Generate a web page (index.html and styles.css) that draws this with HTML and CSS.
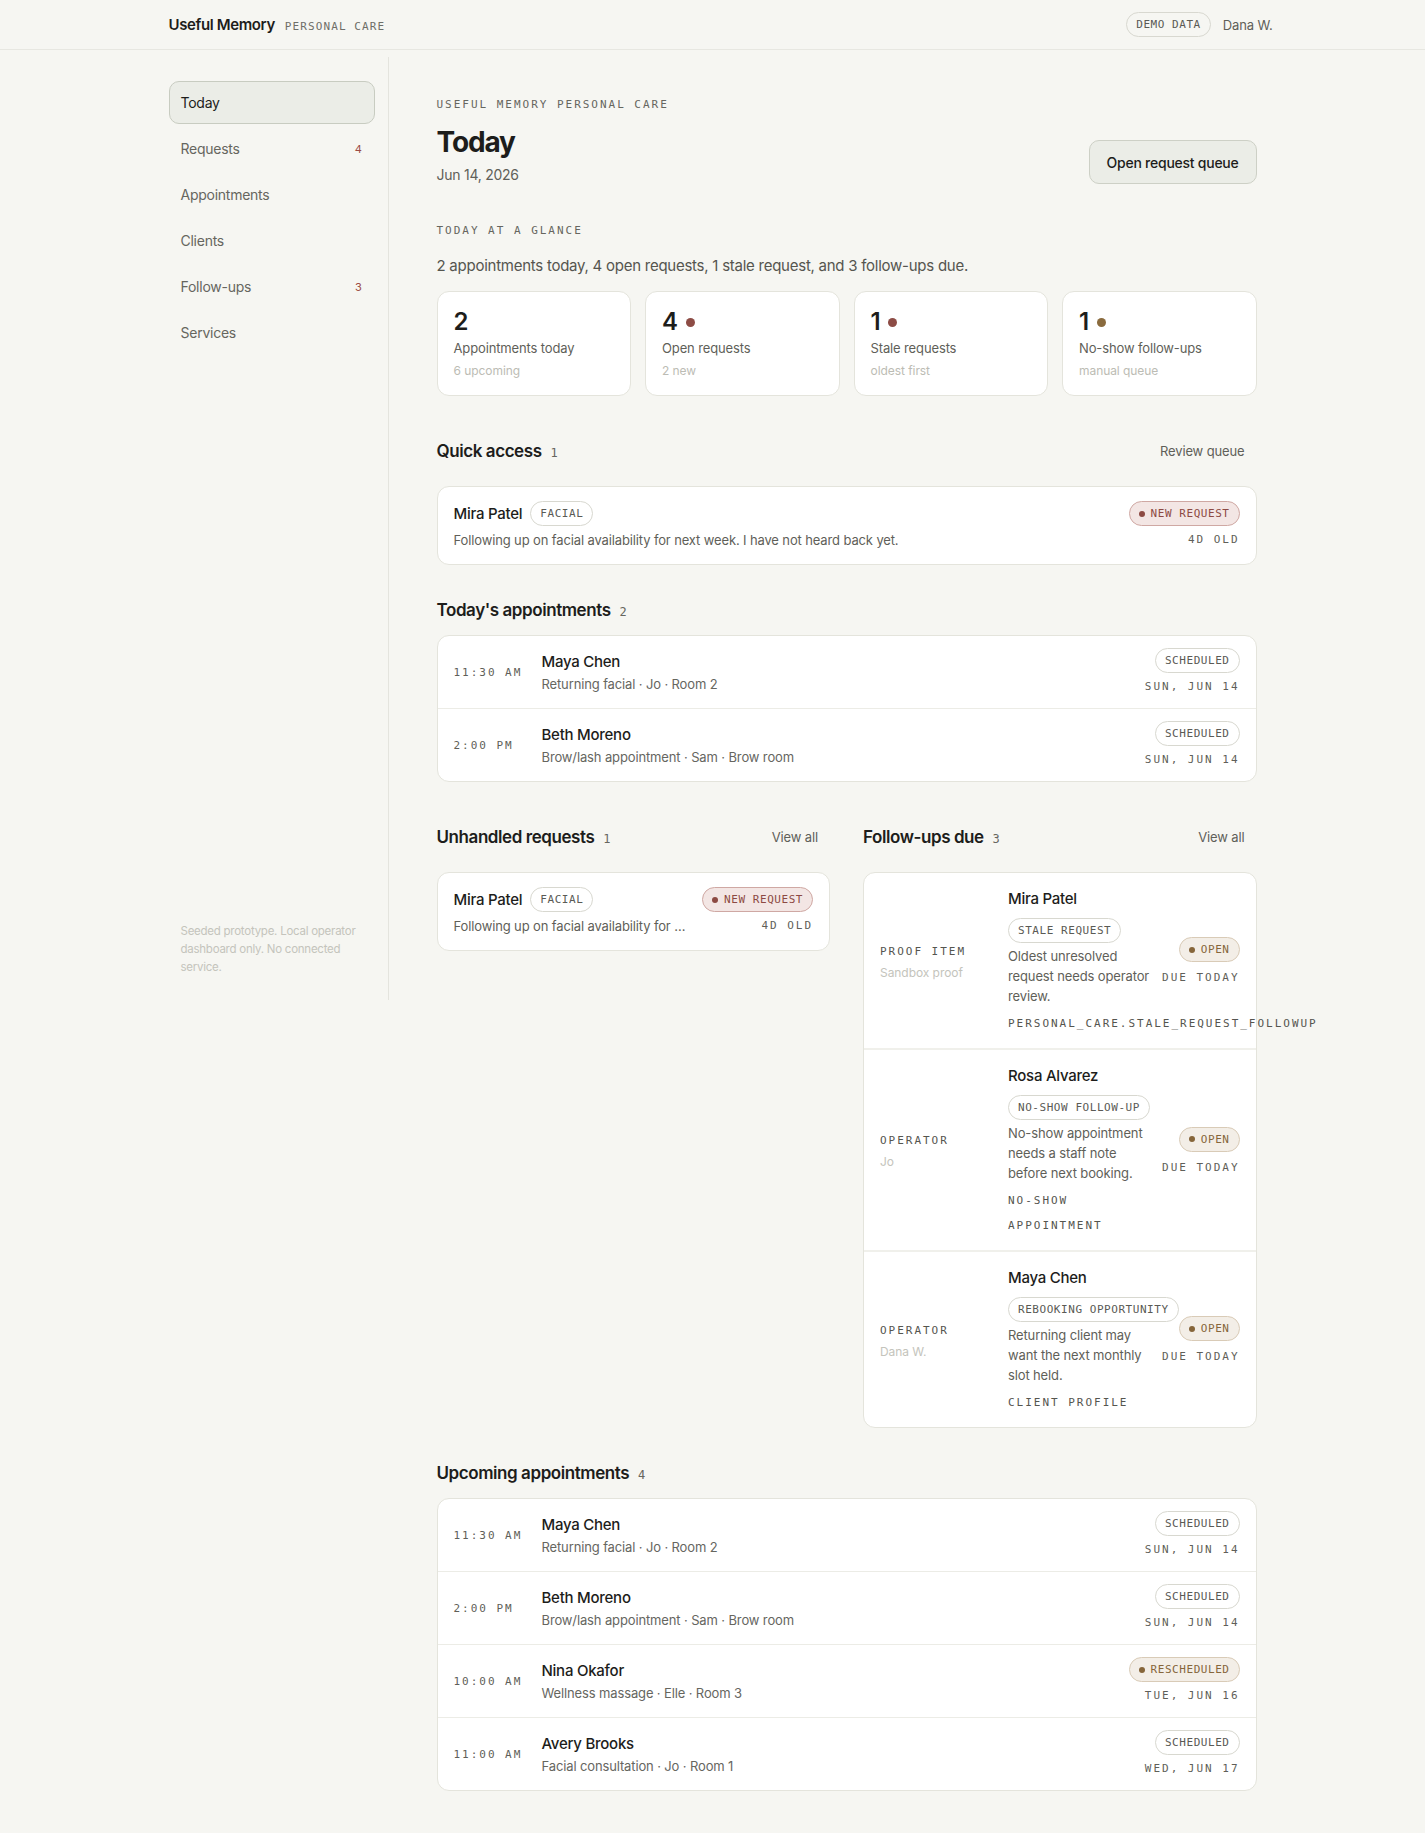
FILE: index.html
```html
<!DOCTYPE html>
<html>
<head>
    <link rel="stylesheet" href="styles.css">
</head>
<body>
    <header class="topbar">
        <div class="topbar-inner">
            <div class="brand">
                <span class="brand-name">Useful Memory</span>
                <span class="brand-tag">PERSONAL CARE</span>
            </div>
            <div class="topbar-right">
                <span class="pill">DEMO DATA</span>
                <span class="user">Dana W.</span>
            </div>
        </div>
    </header>

    <div class="shell">
        <aside class="sidebar">
            <nav class="nav">
                <a class="nav-item active">Today</a>
                <a class="nav-item">Requests <span class="nav-count">4</span></a>
                <a class="nav-item">Appointments</a>
                <a class="nav-item">Clients</a>
                <a class="nav-item">Follow-ups <span class="nav-count">3</span></a>
                <a class="nav-item">Services</a>
            </nav>
            <p class="sidebar-note">Seeded prototype. Local operator dashboard only. No connected service.</p>
        </aside>

        <main class="main">
            <div class="page-head">
                <div>
                    <div class="eyebrow">USEFUL MEMORY PERSONAL CARE</div>
                    <h1>Today</h1>
                    <div class="page-date">Jun 14, 2026</div>
                </div>
                <button class="btn">Open request queue</button>
            </div>

            <section class="glance">
                <div class="eyebrow">TODAY AT A GLANCE</div>
                <p class="summary">2 appointments today, 4 open requests, 1 stale request, and 3 follow-ups due.</p>
                <div class="stats">
                    <div class="stat">
                        <div class="stat-num">2</div>
                        <div class="stat-label">Appointments today</div>
                        <div class="stat-sub">6 upcoming</div>
                    </div>
                    <div class="stat">
                        <div class="stat-num">4 <span class="dot dot-red"></span></div>
                        <div class="stat-label">Open requests</div>
                        <div class="stat-sub">2 new</div>
                    </div>
                    <div class="stat">
                        <div class="stat-num">1 <span class="dot dot-red"></span></div>
                        <div class="stat-label">Stale requests</div>
                        <div class="stat-sub">oldest first</div>
                    </div>
                    <div class="stat">
                        <div class="stat-num">1 <span class="dot dot-amber"></span></div>
                        <div class="stat-label">No-show follow-ups</div>
                        <div class="stat-sub">manual queue</div>
                    </div>
                </div>
            </section>

            <section class="section">
                <div class="section-head">
                    <h2>Quick access <span class="count">1</span></h2>
                    <a class="link">Review queue</a>
                </div>
                <div class="card">
                    <div class="request">
                        <div class="request-main">
                            <div class="request-title">
                                <span class="name">Mira Patel</span>
                                <span class="pill">FACIAL</span>
                            </div>
                            <div class="request-text">Following up on facial availability for next week. I have not heard back yet.</div>
                        </div>
                        <div class="request-side">
                            <span class="pill pill-red"><span class="pill-dot"></span>NEW REQUEST</span>
                            <span class="mono-meta">4D OLD</span>
                        </div>
                    </div>
                </div>
            </section>

            <section class="section">
                <div class="section-head">
                    <h2>Today's appointments <span class="count">2</span></h2>
                </div>
                <div class="card">
                    <div class="appt">
                        <div class="appt-time">11:30 AM</div>
                        <div class="appt-main">
                            <div class="name">Maya Chen</div>
                            <div class="appt-sub">Returning facial · Jo · Room 2</div>
                        </div>
                        <div class="appt-side">
                            <span class="pill">SCHEDULED</span>
                            <span class="mono-meta">SUN, JUN 14</span>
                        </div>
                    </div>
                    <div class="appt">
                        <div class="appt-time">2:00 PM</div>
                        <div class="appt-main">
                            <div class="name">Beth Moreno</div>
                            <div class="appt-sub">Brow/lash appointment · Sam · Brow room</div>
                        </div>
                        <div class="appt-side">
                            <span class="pill">SCHEDULED</span>
                            <span class="mono-meta">SUN, JUN 14</span>
                        </div>
                    </div>
                </div>
            </section>

            <div class="two-col">
                <section class="section">
                    <div class="section-head">
                        <h2>Unhandled requests <span class="count">1</span></h2>
                        <a class="link">View all</a>
                    </div>
                    <div class="card">
                        <div class="request">
                            <div class="request-main">
                                <div class="request-title">
                                    <span class="name">Mira Patel</span>
                                    <span class="pill">FACIAL</span>
                                </div>
                                <div class="request-text truncate">Following up on facial availability for next week. I have not heard back yet.</div>
                            </div>
                            <div class="request-side">
                                <span class="pill pill-red"><span class="pill-dot"></span>NEW REQUEST</span>
                                <span class="mono-meta">4D OLD</span>
                            </div>
                        </div>
                    </div>
                </section>

                <section class="section">
                    <div class="section-head">
                        <h2>Follow-ups due <span class="count">3</span></h2>
                        <a class="link">View all</a>
                    </div>
                    <div class="card">
                        <div class="followup">
                            <div class="fu-owner">
                                <div class="fu-role">PROOF ITEM</div>
                                <div class="fu-who">Sandbox proof</div>
                            </div>
                            <div class="fu-main">
                                <div class="name">Mira Patel</div>
                                <div class="fu-tag"><span class="pill">STALE REQUEST</span></div>
                                <div class="fu-text">Oldest unresolved request needs operator review.</div>
                                <div class="fu-key">PERSONAL_CARE.STALE_REQUEST_FOLLOWUP</div>
                            </div>
                            <div class="fu-side">
                                <span class="pill pill-amber"><span class="pill-dot"></span>OPEN</span>
                                <span class="mono-meta">DUE TODAY</span>
                            </div>
                        </div>
                        <div class="followup">
                            <div class="fu-owner">
                                <div class="fu-role">OPERATOR</div>
                                <div class="fu-who">Jo</div>
                            </div>
                            <div class="fu-main">
                                <div class="name">Rosa Alvarez</div>
                                <div class="fu-tag"><span class="pill">NO-SHOW FOLLOW-UP</span></div>
                                <div class="fu-text">No-show appointment needs a staff note before next booking.</div>
                                <div class="fu-key">NO-SHOW APPOINTMENT</div>
                            </div>
                            <div class="fu-side">
                                <span class="pill pill-amber"><span class="pill-dot"></span>OPEN</span>
                                <span class="mono-meta">DUE TODAY</span>
                            </div>
                        </div>
                        <div class="followup">
                            <div class="fu-owner">
                                <div class="fu-role">OPERATOR</div>
                                <div class="fu-who">Dana W.</div>
                            </div>
                            <div class="fu-main">
                                <div class="name">Maya Chen</div>
                                <div class="fu-tag"><span class="pill">REBOOKING OPPORTUNITY</span></div>
                                <div class="fu-text">Returning client may want the next monthly slot held.</div>
                                <div class="fu-key">CLIENT PROFILE</div>
                            </div>
                            <div class="fu-side">
                                <span class="pill pill-amber"><span class="pill-dot"></span>OPEN</span>
                                <span class="mono-meta">DUE TODAY</span>
                            </div>
                        </div>
                    </div>
                </section>
            </div>

            <section class="section">
                <div class="section-head">
                    <h2>Upcoming appointments <span class="count">4</span></h2>
                </div>
                <div class="card">
                    <div class="appt">
                        <div class="appt-time">11:30 AM</div>
                        <div class="appt-main">
                            <div class="name">Maya Chen</div>
                            <div class="appt-sub">Returning facial · Jo · Room 2</div>
                        </div>
                        <div class="appt-side">
                            <span class="pill">SCHEDULED</span>
                            <span class="mono-meta">SUN, JUN 14</span>
                        </div>
                    </div>
                    <div class="appt">
                        <div class="appt-time">2:00 PM</div>
                        <div class="appt-main">
                            <div class="name">Beth Moreno</div>
                            <div class="appt-sub">Brow/lash appointment · Sam · Brow room</div>
                        </div>
                        <div class="appt-side">
                            <span class="pill">SCHEDULED</span>
                            <span class="mono-meta">SUN, JUN 14</span>
                        </div>
                    </div>
                    <div class="appt">
                        <div class="appt-time">10:00 AM</div>
                        <div class="appt-main">
                            <div class="name">Nina Okafor</div>
                            <div class="appt-sub">Wellness massage · Elle · Room 3</div>
                        </div>
                        <div class="appt-side">
                            <span class="pill pill-amber"><span class="pill-dot"></span>RESCHEDULED</span>
                            <span class="mono-meta">TUE, JUN 16</span>
                        </div>
                    </div>
                    <div class="appt">
                        <div class="appt-time">11:00 AM</div>
                        <div class="appt-main">
                            <div class="name">Avery Brooks</div>
                            <div class="appt-sub">Facial consultation · Jo · Room 1</div>
                        </div>
                        <div class="appt-side">
                            <span class="pill">SCHEDULED</span>
                            <span class="mono-meta">WED, JUN 17</span>
                        </div>
                    </div>
                </div>
            </section>
        </main>
    </div>
</body>
</html>
```

FILE: styles.css
```css
* {
    box-sizing: border-box;
}
body {
    margin: 0;
    background: #f6f6f2;
    color: #1d1d1b;
    font-family: Inter, "Noto Sans", sans-serif;
    font-size: 14px;
    letter-spacing: -0.018em;
}
h1, h2, p {
    margin: 0;
}

/* top bar */
.topbar {
    height: 50px;
    border-bottom: 1px solid #e7e7e1;
}
.topbar-inner {
    max-width: 1088px;
    height: 49px;
    margin: 0 auto;
    display: flex;
    align-items: center;
    justify-content: space-between;
}
.brand {
    display: flex;
    align-items: baseline;
    gap: 10px;
}
.brand-name {
    font-size: 15px;
    font-weight: 600;
    letter-spacing: -0.025em;
}
.brand-tag {
    font-family: "DejaVu Sans Mono", monospace;
    font-size: 11px;
    letter-spacing: 0.1em;
    color: #6e6e68;
}
.topbar-right {
    display: flex;
    align-items: center;
    gap: 12px;
    margin-right: -16px;
}
.user {
    font-size: 13px;
    letter-spacing: -0.01em;
    color: #5f5f59;
}

/* shared pill */
.pill {
    display: inline-flex;
    align-items: center;
    gap: 6px;
    height: 25px;
    padding: 0 9px;
    border: 1px solid #d8d8d0;
    border-radius: 999px;
    background: #fff;
    font-family: "DejaVu Sans Mono", monospace;
    font-size: 11px;
    letter-spacing: 0.05em;
    color: #5a5a55;
    white-space: nowrap;
}
.topbar .pill {
    background: transparent;
}
.pill-dot {
    width: 6px;
    height: 6px;
    border-radius: 50%;
    background: currentColor;
}
.pill-red {
    background: #f3e6e4;
    border-color: #cfa8a3;
    color: #8d4a43;
}
.pill-amber {
    background: #f3eee7;
    border-color: #d9cbb7;
    color: #86663b;
}

/* layout */
.shell {
    max-width: 1088px;
    margin: 0 auto;
    padding-top: 7px;
    display: grid;
    grid-template-columns: 220px minmax(0, 1fr);
    align-items: start;
}
.sidebar {
    height: 943px;
    padding: 24px 13px 24px 0;
    border-right: 1px solid #e4e4de;
    display: flex;
    flex-direction: column;
}
.nav {
    display: flex;
    flex-direction: column;
    gap: 3px;
}
.nav-item {
    display: flex;
    justify-content: space-between;
    align-items: center;
    height: 43px;
    padding: 0 12px 0 11px;
    border: 1px solid transparent;
    border-radius: 10px;
    color: #66665f;
    font-size: 14px;
}
.nav-item.active {
    background: #ebede7;
    border-color: #c8ccc1;
    color: #1d1d1b;
}
.nav-count {
    font-size: 11px;
    color: #9b4b44;
}
.sidebar-note {
    margin-top: auto;
    padding: 0 6px 0 12px;
    font-size: 11.5px;
    line-height: 18px;
    color: #c4c4bc;
}
.main {
    padding: 40px 0 40px 48px;
    min-width: 0;
}

/* page head */
.page-head {
    display: flex;
    justify-content: space-between;
    align-items: flex-end;
}
.eyebrow {
    font-family: "DejaVu Sans Mono", monospace;
    font-size: 11px;
    line-height: 16px;
    letter-spacing: 0.18em;
    color: #66665f;
}
h1 {
    margin: 12px 0 6px;
    font-size: 28px;
    line-height: 34px;
    font-weight: 700;
    letter-spacing: -0.04em;
}
.page-date {
    font-size: 14px;
    line-height: 20px;
    color: #5f5f59;
}
.btn {
    height: 44px;
    padding: 0 17px;
    border: 1px solid #cdd0c6;
    border-radius: 10px;
    background: #ebede7;
    font-family: inherit;
    font-size: 14px;
    font-weight: 500;
    letter-spacing: -0.018em;
    color: #1d1d1b;
    margin-bottom: 1px;
}

/* glance */
.glance {
    margin-top: 38px;
}
.summary {
    margin: 16px 0 14px;
    font-size: 15px;
    line-height: 22px;
    color: #55554f;
}
.stats {
    display: grid;
    grid-template-columns: repeat(4, 1fr);
    gap: 14px;
}
.stat {
    background: #fff;
    border: 1px solid #e4e4dc;
    border-radius: 12px;
    padding: 16px 16px 15px;
}
.stat-num {
    display: flex;
    align-items: center;
    gap: 8px;
    font-size: 24px;
    line-height: 28px;
    font-weight: 600;
}
.dot {
    width: 9px;
    height: 9px;
    border-radius: 50%;
}
.dot-red {
    background: #8d4c45;
}
.dot-amber {
    background: #8a6b3e;
}
.stat-label {
    margin-top: 2px;
    font-size: 13px;
    line-height: 20px;
    letter-spacing: -0.01em;
    color: #5f5f59;
}
.stat-sub {
    margin-top: 4px;
    font-size: 12px;
    line-height: 18px;
    letter-spacing: -0.005em;
    color: #bcbcb4;
}

/* sections */
.section {
    margin-top: 33px;
    min-width: 0;
}
.section-head {
    display: flex;
    justify-content: space-between;
    align-items: center;
    margin-bottom: 13px;
}
h2 {
    font-size: 17px;
    line-height: 24px;
    font-weight: 600;
    letter-spacing: -0.025em;
}
.count {
    margin-left: 5px;
    font-family: "DejaVu Sans Mono", monospace;
    font-size: 12px;
    line-height: 1;
    font-weight: 400;
    letter-spacing: 0;
    color: #66665f;
}
.link {
    display: inline-flex;
    align-items: center;
    min-height: 44px;
    padding: 0 12px;
    font-size: 13px;
    letter-spacing: -0.01em;
    color: #5f5f59;
}
.card {
    background: #fff;
    border: 1px solid #e4e4dc;
    border-radius: 12px;
}
.name {
    font-size: 15px;
    line-height: 22px;
    font-weight: 500;
}
.mono-meta {
    font-family: "DejaVu Sans Mono", monospace;
    font-size: 11px;
    line-height: 18px;
    letter-spacing: 0.18em;
    color: #5f5f59;
    white-space: nowrap;
}

/* request card */
.request {
    display: flex;
    gap: 16px;
    padding: 14px 16px;
}
.request-main {
    flex: 1;
    min-width: 0;
    display: flex;
    flex-direction: column;
    gap: 4px;
}
.request-title {
    display: flex;
    align-items: center;
    gap: 8px;
}
.request-text {
    font-size: 13px;
    line-height: 20px;
    letter-spacing: -0.01em;
    color: #5f5f59;
}
.truncate {
    white-space: nowrap;
    overflow: hidden;
    text-overflow: ellipsis;
}
.request-side {
    display: flex;
    flex-direction: column;
    align-items: flex-end;
    gap: 4px;
}
.request-side .mono-meta {
    line-height: 20px;
}

/* appointment rows */
.appt {
    display: grid;
    grid-template-columns: 76px 1fr auto;
    column-gap: 12px;
    align-items: center;
    padding: 12px 16px;
}
.appt + .appt {
    border-top: 1px solid #ecece6;
}
.appt-time {
    font-family: "DejaVu Sans Mono", monospace;
    font-size: 11px;
    letter-spacing: 0.18em;
    color: #5f5f59;
    white-space: nowrap;
}
.appt-sub {
    margin-top: 1px;
    font-size: 13px;
    line-height: 20px;
    letter-spacing: -0.01em;
    color: #66665f;
}
.appt-side {
    display: flex;
    flex-direction: column;
    align-items: flex-end;
    gap: 5px;
}

/* two columns */
.two-col {
    display: grid;
    grid-template-columns: minmax(0, 1fr) minmax(0, 1fr);
    column-gap: 33px;
    align-items: start;
}

/* follow-up rows */
.followup {
    display: grid;
    grid-template-columns: 116px minmax(0, 1fr) auto;
    column-gap: 12px;
    align-items: center;
    padding: 15px 16px 12px;
}
.followup + .followup {
    border-top: 2px solid #f0f0eb;
}
.fu-role {
    font-family: "DejaVu Sans Mono", monospace;
    font-size: 11px;
    line-height: 16px;
    letter-spacing: 0.18em;
    color: #55554f;
}
.fu-who {
    margin-top: 5px;
    font-size: 12px;
    line-height: 16px;
    letter-spacing: -0.005em;
    color: #c4c4bc;
}
.fu-tag {
    margin-top: 8px;
}
.fu-text {
    margin-top: 3px;
    font-size: 13px;
    line-height: 20px;
    letter-spacing: -0.01em;
    color: #5f5f59;
}
.fu-key {
    margin-top: 5px;
    font-family: "DejaVu Sans Mono", monospace;
    font-size: 11px;
    line-height: 25px;
    letter-spacing: 0.18em;
    color: #55554f;
}
.fu-side {
    display: flex;
    flex-direction: column;
    align-items: flex-end;
    gap: 7px;
}
```
